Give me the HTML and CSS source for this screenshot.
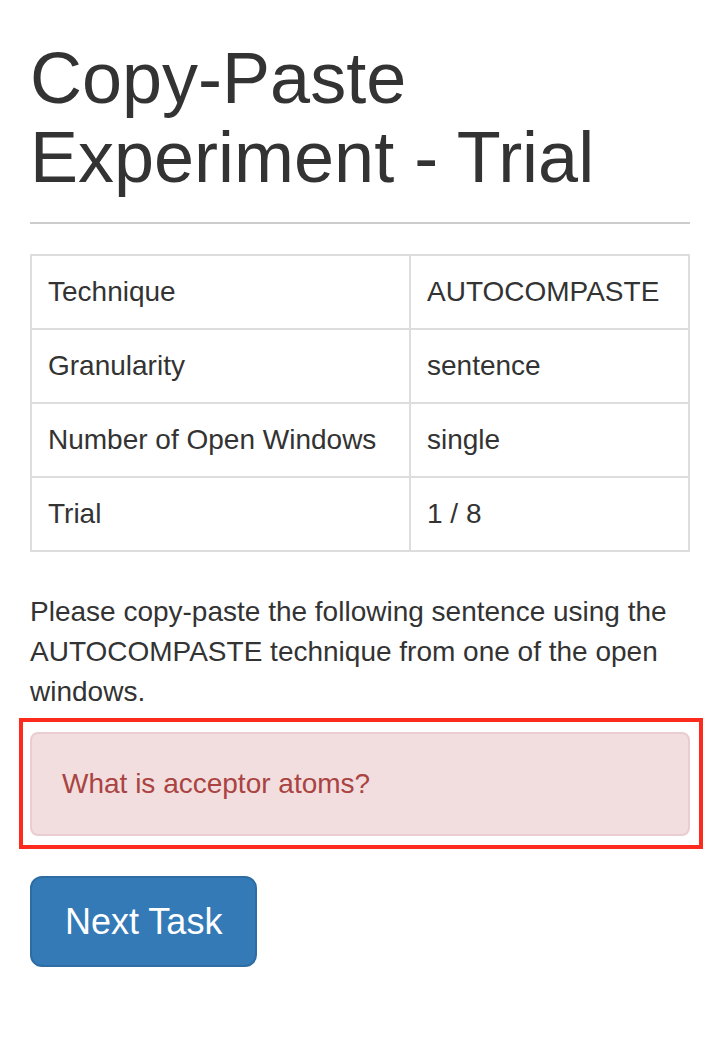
FILE: index.html
```html
<!DOCTYPE html>
<html lang="en">
<head>
<meta charset="utf-8">
<title>Copy-Paste Experiment - Trial</title>
<link rel="stylesheet" href="styles.css">
</head>
<body>
<div class="container">
  <h1 class="title">Copy-Paste Experiment - Trial</h1>
  <hr class="rule">
  <table class="info">
    <colgroup>
      <col class="col-key">
      <col class="col-val">
    </colgroup>
    <tbody>
      <tr><td>Technique</td><td>AUTOCOMPASTE</td></tr>
      <tr><td>Granularity</td><td>sentence</td></tr>
      <tr><td>Number of Open Windows</td><td>single</td></tr>
      <tr><td>Trial</td><td>1 / 8</td></tr>
    </tbody>
  </table>
  <p class="instructions">Please copy-paste the following sentence using the AUTOCOMPASTE technique from one of the open windows.</p>
  <div class="highlight">
    <div class="alert">What is acceptor atoms?</div>
  </div>
  <button class="btn" type="button">Next Task</button>
</div>
</body>
</html>
```
FILE: styles.css
```css
html, body {
  margin: 0;
  padding: 0;
  background: #fff;
}
body {
  font-family: "Liberation Sans", Arial, Helvetica, sans-serif;
  font-size: 28px;
  line-height: 40px;
  color: #333;
}
.container {
  padding: 0 28px 0 30px;
}
.title {
  margin: 39px 0 0 0;
  font-size: 72px;
  line-height: 79px;
  font-weight: normal;
  color: #333;
}
.rule {
  margin: 25px 0 30px 0;
  border: 0;
  height: 2px;
  background: #cccccc;
}
.info {
  width: 100%;
  border-collapse: collapse;
  table-layout: fixed;
  margin-bottom: 40px;
}
.col-key { width: 379px; }
.info td {
  border: 2px solid #dddddd;
  padding: 16px 16px;
  line-height: 40px;
  vertical-align: top;
  white-space: nowrap;
}
.instructions {
  margin: 0 0 20px 0;
}
.highlight {
  margin: -14px -13px 27px -11px;
  padding: 10px 9px 9px 7px;
  border: 4px solid #fc2b1e;
}
.alert {
  background: #f2dede;
  border: 2px solid #ebccd1;
  border-radius: 8px;
  color: #a94442;
  padding: 30px 30px;
  line-height: 40px;
}
.btn {
  display: inline-block;
  font-family: "Liberation Sans", Arial, Helvetica, sans-serif;
  font-size: 36px;
  line-height: 47px;
  padding: 20px 33px;
  color: #fff;
  background: #337ab7;
  border: 2px solid #2e6da4;
  border-radius: 12px;
  margin: 0;
}
```
